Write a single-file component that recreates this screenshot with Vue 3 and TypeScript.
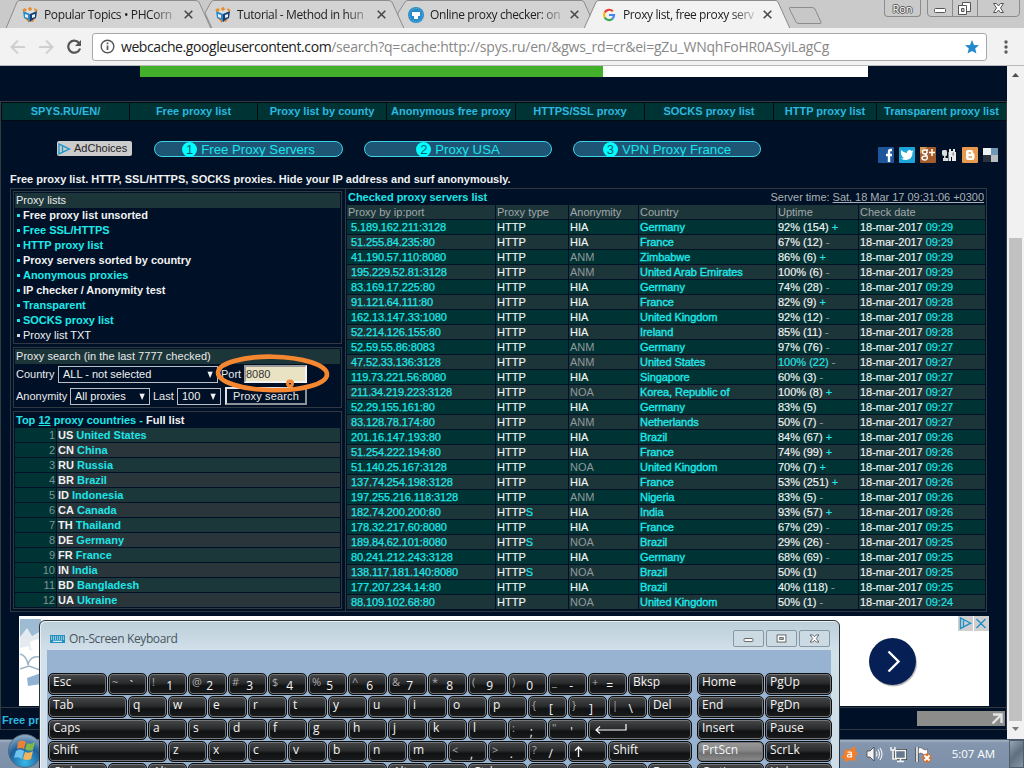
<script setup lang="ts">
interface Tab { title: string; icon: 'cube' | 'disc' | 'google' }
interface Proxy { ip: string; type: string; anon: string; country: string; up: string; trend: string; time: string; hot: boolean }
interface Key { w: number; label?: string; alt?: string; icon?: string; lit?: boolean; low?: boolean }

const tabs: Tab[] = [
  { title: 'Popular Topics • PHCorn', icon: 'cube' },
  { title: 'Tutorial - Method in hun', icon: 'cube' },
  { title: 'Online proxy checker: on', icon: 'disc' },
  { title: 'Proxy list, free proxy serv', icon: 'google' },
]

const nav = ['SPYS.RU/EN/', 'Free proxy list', 'Proxy list by county', 'Anonymous free proxy', 'HTTPS/SSL proxy', 'SOCKS proxy list', 'HTTP proxy list', 'Transparent proxy list']
const pills = ['Free Proxy Servers', 'Proxy USA', 'VPN Proxy France']

const lists = [
  { t: 'Free proxy list unsorted', c: 'white' },
  { t: 'Free SSL/HTTPS', c: 'cyan' },
  { t: 'HTTP proxy list', c: 'cyan' },
  { t: 'Proxy servers sorted by country', c: 'white' },
  { t: 'Anonymous proxies', c: 'cyan' },
  { t: 'IP checker / Anonymity test', c: 'white' },
  { t: 'Transparent', c: 'cyan' },
  { t: 'SOCKS proxy list', c: 'cyan' },
  { t: 'Proxy list TXT', c: 'plain' },
]

const countries = ['US United States', 'CN China', 'RU Russia', 'BR Brazil', 'ID Indonesia', 'CA Canada', 'TH Thailand', 'DE Germany', 'FR France', 'IN India', 'BD Bangladesh', 'UA Ukraine']
  .map((s) => ({ code: s.slice(0, 2), name: s.slice(3) }))

const raw = `5.189.162.211:3128|HTTP|HIA|Germany|92% (154)|+|09:29
51.255.84.235:80|HTTP|HIA|France|67% (12)|-|09:29
41.190.57.110:8080|HTTP|ANM|Zimbabwe|86% (6)|+|09:29
195.229.52.81:3128|HTTP|ANM|United Arab Emirates|100% (6)|-|09:29
83.169.17.225:80|HTTP|HIA|Germany|74% (28)|-|09:29
91.121.64.111:80|HTTP|HIA|France|82% (9)|+|09:28
162.13.147.33:1080|HTTP|HIA|United Kingdom|92% (12)|-|09:28
52.214.126.155:80|HTTP|HIA|Ireland|85% (11)|-|09:28
52.59.55.86:8083|HTTP|ANM|Germany|97% (76)|-|09:27
47.52.33.136:3128|HTTP|ANM|United States|100% (22)|-|09:27
119.73.221.56:8080|HTTP|HIA|Singapore|60% (3)|-|09:27
211.34.219.223:3128|HTTP|NOA|Korea, Republic of|100% (8)|+|09:27
52.29.155.161:80|HTTP|HIA|Germany|83% (5)||09:27
83.128.78.174:80|HTTP|ANM|Netherlands|50% (7)|-|09:27
201.16.147.193:80|HTTP|HIA|Brazil|84% (67)|+|09:26
51.254.222.194:80|HTTP|HIA|France|74% (99)|+|09:26
51.140.25.167:3128|HTTP|NOA|United Kingdom|70% (7)|+|09:26
137.74.254.198:3128|HTTP|HIA|France|53% (251)|+|09:26
197.255.216.118:3128|HTTP|ANM|Nigeria|83% (5)|-|09:26
182.74.200.200:80|HTTPS|HIA|India|93% (57)|+|09:26
178.32.217.60:8080|HTTP|HIA|France|67% (29)|-|09:25
189.84.62.101:8080|HTTPS|NOA|Brazil|29% (26)|-|09:25
80.241.212.243:3128|HTTP|HIA|Germany|68% (69)|-|09:25
138.117.181.140:8080|HTTPS|NOA|Brazil|50% (1)||09:25
177.207.234.14:80|HTTP|HIA|Brazil|40% (118)|-|09:25
88.109.102.68:80|HTTP|NOA|United Kingdom|50% (1)|-|09:24`
const proxies: Proxy[] = raw.split('\n').map((l) => {
  const [ip, type, anon, country, up, trend, time] = l.split('|')
  return { ip, type, anon, country, up, trend, time, hot: up === '100% (22)' }
})

const k = (w: number, label: string): Key => ({ w, label })
const chars = (s: string): Key[] => [...s].map((c) => k(39, c))
const pair = (alt: string, label: string): Key => ({ w: 39, alt, label, low: true })
const mainKeys: Key[][] = [
  [k(59, 'Esc'), pair('~', '`'), pair('!', '1'), pair('@', '2'), pair('#', '3'), pair('$', '4'), pair('%', '5'), pair('^', '6'), pair('&', '7'), pair('*', '8'), pair('(', '9'), pair(')', '0'), pair('_', '-'), pair('+', '='), k(64, 'Bksp')],
  [k(79, 'Tab'), ...chars('qwertyuiop'), pair('{', '['), pair('}', ']'), pair('|', '\\'), k(44, 'Del')],
  [k(99, 'Caps'), ...chars('asdfghjkl'), pair(':', ';'), pair('"', "'"), { w: 104, icon: 'enter' }],
  [k(119, 'Shift'), ...chars('zxcvbnm'), pair('<', ','), pair('>', '.'), pair('?', '/'), { w: 39, icon: 'up' }, k(84, 'Shift')],
  [k(59, 'Ctrl'), { w: 39, icon: 'win' }, k(39, 'Alt'), k(199, ''), k(39, 'Alt'), { w: 39, icon: 'menu' }, k(59, 'Ctrl'), k(39, ''), k(39, ''), k(39, ''), k(44, 'Fn')],
]
const sideKeys: Key[][] = [
  [k(67, 'Home'), k(67, 'PgUp')],
  [k(67, 'End'), k(67, 'PgDn')],
  [k(67, 'Insert'), k(67, 'Pause')],
  [{ w: 67, label: 'PrtScn', lit: true }, k(67, 'ScrLk')],
  [k(67, 'Options'), k(67, 'Help')],
]
</script>

<template>
  <div class="screen">
    <header class="strip">
      <svg class="strip-bg" width="1024" height="29" viewBox="0 0 1024 29">
        <g fill="#d3d3d3" stroke="#8c8c8c">
          <path d="M398 13 L405 2 Q406 .5 408 .5 H581 Q583 .5 584 2 L596 28.500H398Z" />
          <path d="M205 13 L211 2 Q212 .5 214 .5 H388 Q391 .5 392 2 L404 28.500H212Z" />
          <path d="M6 28.500 L17 2 Q18 .5 20 .5 H195 Q198 .5 199 2 L211 28.500Z" />
          <path d="M790 7.500H812Q814 7.500 815 9L821 22Q821.500 23.500 820 23.500H799Q797 23.500 796 22L789.500 9Q789 7.500 790 7.500Z" fill="#c8c8c8" />
        </g>
        <path d="M0 28.500H584L596 2Q597 .5 599 .5H775Q777 .5 778 2L790 28.500H1024" fill="none" stroke="#8c8c8c" />
        <path d="M584.500 29L596.500 2.500Q597 1 599 1H775Q777 1 777.500 2.500L789.500 29Z" fill="#f2f2f2" />
      </svg>
      <div class="tabs">
        <div v-for="t in tabs" :key="t.title" class="tab">
          <svg v-if="t.icon === 'cube'" width="16" height="16" viewBox="0 0 16 16">
            <path d="M1 4L8 2L15 4L8 7Z" fill="#d9e0e4" /><path d="M1 4L8 7V15L2 11Z" fill="#2a86c6" /><path d="M15 4L8 7V15L14 11Z" fill="#173f73" />
            <path d="M0 3L3 1L5 3L3 5Z M6 1L9 0L10 3L7 4Z M12 1L16 3L13 5Z" fill="#e98b28" /><path d="M3 7L6 8V11L3 10ZM10 8L13 7V10L10 11Z" fill="#e8eef2" /><path d="M3 11L7 13V16ZM9 14L13 11L11 15Z" fill="#de7e22" />
          </svg>
          <svg v-else-if="t.icon === 'disc'" width="16" height="16" viewBox="0 0 16 16">
            <circle cx="8" cy="8" r="8" fill="#278bc8" /><circle cx="8" cy="8" r="6.500" fill="none" stroke="#6bb8e3" stroke-dasharray="1 1" /><path d="M4 5H12V9H10V12H6V9H4Z" fill="#fff" />
          </svg>
          <svg v-else width="16" height="16" viewBox="0 0 16 16" fill="none" stroke-width="2.200">
            <path d="M11.800 4.300A5 5 0 0 0 3.700 5.500" stroke="#e94235" /><path d="M3.700 5.500A5 5 0 0 0 3.700 10.500" stroke="#f9bb05" /><path d="M3.700 10.500A5 5 0 0 0 11.500 11.700" stroke="#34a853" /><path d="M11.500 11.700A5 5 0 0 0 13 8H8" stroke="#4285f4" />
          </svg>
          <span class="tab-title">{{ t.title }}</span>
          <svg width="9" height="9" viewBox="0 0 9 9"><path d="M.7.7L8.300 8.300M8.300.7L.7 8.300" stroke="#4a4a4a" stroke-width="1.600" /></svg>
        </div>
      </div>
      <div class="win-btns">
        <span class="user">Ron</span>
        <svg width="93" height="17" viewBox="0 0 93 17">
          <path d="M.5 0V13Q.5 16.500 4 16.500H89Q92.500 16.500 92.500 13V0M25.500 0V16M50.500 0V16" fill="none" stroke="#8b8b8b" />
          <rect x="7.500" y="8.500" width="11" height="4" rx="1" fill="#fff" stroke="#555" />
          <path d="M35.500 2.500H43.500V11.500H35.500Z" fill="#fff" stroke="#555" /><path d="M31.500 5.500H39.500V14.500H31.500Z" fill="#fff" stroke="#555" /><path d="M34.500 8.500H37V11.500H34.500Z" fill="#ccc" stroke="#555" />
          <path d="M66.500 3.500H69.500L71.500 6L73.500 3.500H76.500L73.500 8L76.500 12.500H73.500L71.500 10L69.500 12.500H66.500L69.500 8Z" fill="#fff" stroke="#555" />
        </svg>
      </div>
    </header>

    <div class="toolbar">
      <svg width="76" height="20" viewBox="0 0 76 20" fill="none" stroke-width="2">
        <path d="M20 10H7M13 3.500L6.500 10L13 16.500" stroke="#cfcfcf" /><path d="M34 10H47M41 3.500L47.500 10L41 16.500" stroke="#cfcfcf" />
        <path d="M74 6A6 6 0 1 0 75 11.500" stroke="#555" stroke-width="2.200" /><path d="M76 3V9H70Z" fill="#555" />
      </svg>
      <div class="omni">
        <svg width="15" height="15" viewBox="0 0 15 15"><circle cx="7.500" cy="7.500" r="6.300" fill="none" stroke="#555" stroke-width="1.400" /><path d="M7.500 6.500V11M7.500 3.500V5.200" stroke="#555" stroke-width="1.700" /></svg>
        <div class="url"><b>webcache.googleusercontent.com</b><span>/search?q=cache:http://spys.ru/en/&amp;gws_rd=cr&amp;ei=gZu_WNqhFoHR0ASyiLagCg</span></div>
        <svg class="star" width="14" height="14" viewBox="0 0 14 14"><path d="M7 0L9 4.900L14 5.300L10.200 8.600L11.400 13.600L7 10.900L2.600 13.600L3.800 8.600L0 5.300L5 4.900Z" fill="#2389cd" /></svg>
      </div>
      <svg width="4" height="14" viewBox="0 0 4 14" fill="#5a5a5a"><circle cx="2" cy="2" r="1.700" /><circle cx="2" cy="7" r="1.700" /><circle cx="2" cy="12" r="1.700" /></svg>
    </div>

    <div class="viewport">
      <main class="page">
        <div class="banner-top"><i></i></div>
        <div class="frame">
          <nav><a v-for="n in nav" :key="n">{{ n }}</a></nav>

          <div class="promo">
            <div class="adchoices"><svg width="13" height="12" viewBox="0 0 13 12" fill="none" stroke="#2597cc" stroke-width="1.400"><path d="M1 1V11L11.500 6ZM4.500 3V9" /></svg>AdChoices</div>
            <div v-for="(p, i) in pills" :key="p" class="pill"><em>{{ i + 1 }}</em><span>{{ p }}</span></div>
            <div class="social">
              <svg viewBox="0 0 16 16"><rect width="16" height="16" rx="1" fill="#1d569b" /><path d="M14 3H12.500Q11 3 11 5V15M8 8H14" stroke="#fff" stroke-width="2.400" fill="none" /></svg>
              <svg viewBox="0 0 16 16"><rect width="16" height="16" rx="1" fill="#1ba4d8" /><path d="M2 3Q5 6 8 6Q8 3 10.500 3Q12 3 12.500 4L14.500 3.500L13.500 5Q14 12 7 13Q4 13 2 11.500Q4 11.500 5 11Q3 10 3 9Q1.500 7 2 3Z" fill="#fff" /></svg>
              <svg viewBox="0 0 16 16"><rect width="16" height="16" rx="1" fill="#a55c2c" /><path d="M0 0H7L0 7Z" fill="#d39b55" /><path d="M8 3H5Q2.500 3 2.500 5T5 7Q7 7 7 5T6 3M5 7L7 9Q8 13 5 13Q2 13 2 11T6 9M12 2V9M9 5.500H15" fill="none" stroke="#fff" stroke-width="1.500" /></svg>
              <svg viewBox="0 0 16 16"><path d="M1 4Q1 3 3 3H5Q6 3 6 5V8Q6 9 4.500 9V11H7V14H2V11H3V9Q1 9 1 7Z" fill="#dcdcdc" /><path d="M8 5V2H10V4H12V2H14V5H15V14H11V10H10V14H7.500V5Z" fill="#e9e9e9" /><path d="M11.500 5.500H13V8.500H11.500Z" fill="#8b8f94" /></svg>
              <svg viewBox="0 0 16 16"><rect width="16" height="16" rx="1" fill="#e7994f" /><path d="M4 5Q4 3 6 3H9Q11 3 11 5Q11 6.500 12.500 7V11Q12.500 13 10 13H6Q4 13 4 11Z" fill="#fff" /><path d="M6.500 6H9M6.500 10H10" stroke="#e7994f" stroke-width="1.500" /></svg>
              <svg viewBox="0 0 16 16"><path d="M0 1H8V8H0Z" fill="#eef2f4" /><path d="M8 1H15V8H8Z" fill="#6f98b7" /><path d="M0 8H8V15H0Z" fill="#29323d" /><path d="M8 8H15V15H8Z" fill="#b9bec2" /></svg>
            </div>
          </div>

          <p class="intro">Free proxy list. HTTP, SSL/HTTPS, SOCKS proxies. Hide your IP address and surf anonymously.</p>

          <div class="columns">
            <section class="left">
              <div class="box b1">
                <h3>Proxy lists</h3>
                <div v-for="l in lists" :key="l.t" class="li" :class="l.c"><i></i><span>{{ l.t }}</span></div>
              </div>
              <div class="box b2">
                <h3 class="s2">Proxy search (in the last 7777 checked)</h3>
                <div class="form r1"><label>Country</label><div class="sel w1"><span>ALL - not selected</span><u>▼</u></div><label class="port">Port</label><div class="inp">8080</div></div>
                <div class="form r2"><label>Anonymity</label><div class="sel w2"><span>All proxies</span><u>▼</u></div><label class="last">Last</label><div class="sel w3"><span>100</span><u>▼</u></div><div class="btn">Proxy search</div></div>
              </div>
              <div class="box b3">
                <h4>Top <u>12</u> proxy countries - <span>Full list</span></h4>
                <div v-for="(c, i) in countries" :key="c.code" class="crow" :class="{ alt: i % 2 }"><em>{{ i + 1 }}</em><div><b>{{ c.code }}</b> {{ c.name }}</div></div>
              </div>
            </section>
            <section class="right">
              <div class="rhead"><b>Checked proxy servers list</b><span>Server time: <u>Sat, 18 Mar 17 09:31:06 +0300</u></span></div>
              <div class="row hd"><div>Proxy by ip:port</div><div>Proxy type</div><div>Anonymity</div><div>Country</div><div>Uptime</div><div>Check date</div></div>
              <div v-for="(p, i) in proxies" :key="p.ip" class="row" :class="{ odd: i % 2 }">
                <div class="ip">{{ p.ip }}</div>
                <div>HTTP<s v-if="p.type === 'HTTPS'">S</s></div>
                <div :class="p.anon">{{ p.anon }}</div>
                <div class="cn">{{ p.country }}</div>
                <div :class="{ hot: p.hot }">{{ p.up }} <s v-if="p.trend === '+'">+</s><i v-else>{{ p.trend }}</i></div>
                <div class="dt">18-mar-2017 <s>{{ p.time }}</s></div>
              </div>
            </section>
          </div>

          <div class="ad">
            <svg width="22" height="90" viewBox="0 0 22 90"><path d="M1 3H22V22L12 26L1 21Z" fill="#9dbbd2" /><path d="M1 21L8 12L13 20L22 15V34H10V30L1 32Z" fill="#e3ebf1" /><path d="M11 26Q18 22 22 24V36L12 33Z" fill="#fff" /><path d="M1 38Q8 40 9 49Q11 39 21 41V54L10 50L1 53" fill="none" stroke="#9db5c8" stroke-width="1.500" /><path d="M8 62L22 57V68L9 70Z" fill="#91b2d2" /></svg>
            <div class="ad-r">
              <svg class="go" width="50" height="50" viewBox="0 0 50 50"><circle cx="25.500" cy="26" r="23.500" fill="#bbb" /><circle cx="24.500" cy="24.500" r="23.500" fill="#061f55" /><path d="M20.500 14.500L30.500 24.500L20.500 34.500" fill="none" stroke="#fff" stroke-width="2.400" /></svg>
              <svg class="adx" width="31" height="15" viewBox="0 0 31 15"><path d="M0 0H15V15H0ZM16 0H31V15H16Z" fill="#cfcfcf" /><path d="M2.500 2V12.500L12.500 7.200ZM5.500 4.500V10.500M18.500 3L27.500 12M27.500 3L18.500 12" fill="none" stroke="#2390c8" stroke-width="1.400" /></svg>
            </div>
          </div>
          <footer><b>Free pr</b><div class="grip"><svg width="12" height="12" viewBox="0 0 12 12"><path d="M2 1.500H10.500V10M10 2L1.500 10.500" fill="none" stroke="#e4e4e4" stroke-width="2.400" /></svg></div></footer>
        </div>
      </main>
      <div class="sb">
        <svg width="7" height="4" viewBox="0 0 7 4"><path d="M0 4L3.500 0L7 4Z" fill="#4e4e4e" /></svg>
        <div class="thumb"></div>
        <svg class="dn" width="7" height="4" viewBox="0 0 7 4"><path d="M0 0L3.500 4L7 0Z" fill="#7a7a7a" /></svg>
      </div>
    </div>

    <div class="taskbar">
      <div class="tray">
        <svg width="17" height="17" viewBox="0 0 17 17"><path d="M4 3L8 4L14 0L14.500 5L17 8L14 10L15 15L9.500 14L4 16L4 13L0 12L3 8Z" fill="#f47d27" /><path d="M6.500 6.200H9.500Q10.500 6.200 10.500 7.500V11.500M10.500 8.300H8Q6.300 8.500 6.300 9.800T8 11Q10.500 11 10.500 9" fill="none" stroke="#fff" stroke-width="1.200" /></svg>
        <svg width="17" height="16" viewBox="0 0 17 16"><path d="M1 5H4L8 1V15L4 11H1Z" fill="#f4f4f4" stroke="#333" stroke-width=".7" /><path d="M10 5.500Q12 8 10 10.500M12 3.500Q15 8 12 12.500M14 2Q18 8 14 14" fill="none" stroke="#f4f4f4" stroke-width="1.100" /></svg>
        <svg width="17" height="17" viewBox="0 0 17 17"><path d="M5.500 4.500H15.500V12.500H5.500Z" fill="#566b80" stroke="#333" stroke-width="3" /><path d="M5.500 4.500H15.500V12.500H5.500Z" fill="#65788d" stroke="#f3f3f3" stroke-width="1.500" /><path d="M1 1V4H5V1M3 4V13H7M7 15.500H14M10.500 13V15" fill="none" stroke="#f3f3f3" stroke-width="1.500" /></svg>
        <svg width="17" height="17" viewBox="0 0 17 17"><path d="M2 1V16" stroke="#333" stroke-width="3" /><path d="M2 1V16" stroke="#fff" stroke-width="1.600" /><path d="M3.500 2Q6 1 8 3T12.500 3V9Q10 10 8 8T3.500 8Z" fill="#fff" stroke="#444" stroke-width=".5" /><circle cx="12" cy="12" r="4.500" fill="#db7028" /><path d="M9.500 9.500L14.500 14.500M14.500 9.500L9.500 14.500" stroke="#fff" stroke-width="2" /></svg>
      </div>
      <span class="clock">5:07 AM</span>
      <div class="peek"></div>
    </div>

    <svg class="orb" width="34" height="36" viewBox="0 0 34 36">
      <defs><radialGradient id="o" cx=".5" cy=".85" r=".9"><stop offset="0" stop-color="#37b8e8" /><stop offset=".55" stop-color="#1c5f9c" /><stop offset="1" stop-color="#a9bccb" /></radialGradient></defs>
      <circle cx="17" cy="18" r="16.500" fill="url(#o)" stroke="#55687b" />
      <path d="M10 9Q14 6 18 9L16 16Q12 14 9 16Z" fill="#e88236" /><path d="M19 10Q23 12 27 9L25 17Q21 19 17 16Z" fill="#7fb84a" /><path d="M8 18Q12 15 16 18L14 26Q10 23 6 25Z" fill="#6fc3ee" /><path d="M17 19Q21 21 25 18L23 26Q19 28 15 26Z" fill="#f2b55c" />
    </svg>

    <svg class="mark" width="118" height="44" viewBox="0 0 118 44" fill="none" stroke="#f58731">
      <ellipse cx="58.500" cy="21.500" rx="54.500" ry="16.800" stroke-width="4.600" transform="rotate(1 59 21.500)" /><circle cx="76" cy="31.500" r="2.500" stroke-width="3" />
    </svg>

    <div class="osk">
      <div class="osk-title">
        <svg width="15" height="8" viewBox="0 0 15 8"><rect width="15" height="8" fill="#2390be" /><path d="M1 2H14M1 4H14" stroke="#fff" stroke-dasharray="1 1" /><path d="M3 6.300H12" stroke="#fff" /></svg>
        <span>On-Screen Keyboard</span>
        <div class="osk-btns">
          <svg viewBox="0 0 31 17"><rect x="10.500" y="8.500" width="10" height="3.500" rx="1" fill="#fff" stroke="#555" /></svg>
          <svg viewBox="0 0 31 17"><rect x="10.500" y="4.500" width="10" height="8" fill="#fff" stroke="#555" /><rect x="13.500" y="7.500" width="4" height="2" fill="#ccc" stroke="#555" /></svg>
          <svg viewBox="0 0 31 17"><path d="M10.500 4.500H13.500L15.500 6.500L17.500 4.500H20.500L17.500 8.500L20.500 12.500H17.500L15.500 10.500L13.500 12.500H10.500L13.500 8.500Z" fill="#fff" stroke="#555" /></svg>
        </div>
      </div>
      <div class="osk-body">
        <div v-for="(g, gi) in [mainKeys, sideKeys]" :key="gi" class="keys">
          <div v-for="(r, ri) in g" :key="ri" class="krow">
            <div v-for="(key, ki) in r" :key="ki" class="key" :class="{ lit: key.lit, pair: key.low }" :style="{ width: key.w + 'px' }">
              <small v-if="key.alt">{{ key.alt }}</small>
              <span v-if="key.label">{{ key.label }}</span>
              <svg v-if="key.icon === 'enter'" width="34" height="12" viewBox="0 0 34 12" fill="none" stroke="#fff" stroke-width="1.200"><path d="M32 1V7H2M6 3.500L2 7L6 10.500" /></svg>
              <svg v-if="key.icon === 'up'" width="9" height="14" viewBox="0 0 9 14" fill="none" stroke="#fff" stroke-width="1.300"><path d="M4.500 12V2M1 5.500L4.500 2L8 5.500" /></svg>
              <svg v-if="key.icon === 'win'" width="11" height="10" viewBox="0 0 11 10" fill="#ddd"><path d="M1 3Q3 1 5 2.500V6H0ZM6 3Q8 4 11 2.500V6H6Z" /></svg>
              <svg v-if="key.icon === 'menu'" width="12" height="10" viewBox="0 0 12 10" fill="none" stroke="#fff"><path d="M1 2H11V9H1Z" stroke-width="2" /></svg>
            </div>
          </div>
        </div>
      </div>
    </div>
  </div>
</template>

<style>
html, body { margin: 0; overflow: hidden; }
</style>

<style scoped>
* { box-sizing: border-box; }
s, u, em, i { text-decoration: none; font-style: normal; }
svg { display: block; flex: none; }
.screen { position: relative; width: 1024px; height: 768px; overflow: hidden; font: 11px/15px "Liberation Sans", Arial, sans-serif; background: #001024; display: flex; flex-direction: column; }

.strip { position: relative; height: 28px; flex: none; background: #cacaca; display: flex; justify-content: space-between; }
.strip-bg { position: absolute; left: 0; top: 0; }
.tabs { position: relative; display: flex; padding-left: 22px; }
.tab { width: 193px; display: flex; align-items: center; padding-top: 1px; }
.tab-title { width: 134px; margin: 0 6px 0 6px; overflow: hidden; white-space: nowrap; font: 12px/20px "Open Sans", "Noto Sans", sans-serif; letter-spacing: -.38px; color: #222; -webkit-mask-image: linear-gradient(90deg, #000 108px, rgba(0, 0, 0, .2) 132px); mask-image: linear-gradient(90deg, #000 108px, rgba(0, 0, 0, .2) 132px); }
.win-btns { position: relative; display: flex; gap: 6px; padding-right: 4px; align-items: flex-start; }
.user { width: 37px; height: 17px; border: 1px solid #8b8b8b; border-top: 0; border-radius: 0 0 4px 4px; text-align: center; font: 11px/17px "Open Sans", sans-serif; color: #fff; text-shadow: 1px 0 #555, -1px 0 #555, 0 1px #555, 0 -1px #555; }

.toolbar { position: relative; height: 38px; flex: none; background: #f2f2f2; border-bottom: 1px solid #b9b9b9; display: flex; align-items: center; padding: 0 15px 0 5px; }
.toolbar > svg:last-child { margin-left: 17px; }
.omni { margin-left: 11px; width: 895px; height: 28px; border: 1px solid #a8a8a8; border-radius: 3px; background: #fff; display: flex; align-items: center; padding: 0 7px; }
.url { margin-left: 6px; font: 14px/20px "Open Sans", "Noto Sans", sans-serif; letter-spacing: -.21px; white-space: nowrap; color: #888; }
.url b { font-weight: 400; color: #222; letter-spacing: -.42px; }
.star { margin-left: auto; }

.viewport { height: 673px; flex: none; display: flex; }
.page { width: 1007px; background: #001026; color: #e8eaea; }
.banner-top { margin: 0 139px 0 140px; height: 11px; background: #fff; }
.banner-top i { display: block; width: 463px; height: 11px; background: #43b02b; }
.frame { margin-top: 24px; height: 629px; border: 1px solid #333b42; border-bottom: 0; }
nav { display: grid; grid-template-columns: 128px 128px 129px 129px 129px 129px 103px 130px; height: 18px; }
nav a { background: #003333; border: 1px solid #000a10; border-right-width: 0; color: #2cb8e0; font-weight: 700; text-align: center; line-height: 17px; white-space: nowrap; }
.promo { height: 44px; margin-top: 21px; display: flex; align-items: flex-start; padding-left: 56px; }
.adchoices { width: 75px; height: 15px; background: #ccc; border-radius: 2px; display: flex; align-items: center; gap: 3px; padding-left: 1px; color: #222; font-size: 11px; }
.pill { margin-left: 21px; width: 188px; height: 16px; border: 1px solid #3ad5e8; border-radius: 8px; background: #1e5474; color: #17e6ee; font-size: 13.200px; line-height: 15px; display: flex; justify-content: center; gap: 4px; white-space: nowrap; }
.adchoices + .pill { margin-left: 22px; width: 189px; }
.pill em { width: 15px; height: 15px; border-radius: 8px; background: #0ff; color: #075c70; text-align: center; font-size: 13px; }
.social { display: flex; gap: 5px; margin: 6px 0 0 117px; }
.social svg { width: 16px; height: 16px; }
.intro { margin: -14px 0 0 9px; height: 17px; line-height: 17px; font-weight: 700; color: #f0f2f2; white-space: nowrap; }

.columns { display: flex; margin: 0 0 0 9px; width: 977px; height: 424px; border: 1px solid #303941; }
.left { width: 334px; padding: 2px; flex: none; }
.box { width: 329px; border: 1px solid #303941; padding: 1px; }
.b1 { height: 153px; }
.b2 { height: 61px; margin-top: 3px; }
.b3 { height: 198px; margin-top: 3px; }
h3 { margin: 0; height: 15px; line-height: 15px; font-size: 11px; font-weight: 400; background: #1c3539; color: #e8eaea; padding-left: 1px; }
.s2 { letter-spacing: .04px; }
.li { display: flex; align-items: center; height: 15px; padding-left: 2px; gap: 3px; font-weight: 700; color: #f0f2f2; white-space: nowrap; letter-spacing: -.02px; }
.li i { width: 3px; height: 3px; background: #1de5e8; }
.cyan { color: #1de9ea; }
.plain { font-weight: 400; }
.plain i { background: #ddd; }
.form { display: flex; align-items: center; height: 22px; padding-left: 1px; white-space: nowrap; line-height: 14px; }
.r1 { margin-top: -1px; }
.form label { flex: none; }
.sel { height: 17px; border: 1px solid #b9bfc4; display: flex; align-items: center; justify-content: space-between; padding: 0 4px 0 4px; color: #f0f2f2; flex: none; }
.sel u { font: 8px/13px "DejaVu Sans", sans-serif; transform: scaleX(.85); }
.r1 label:first-child { width: 42px; }
.r2 label:first-child { width: 54px; }
.w1 { width: 160px; }
.w2 { width: 80px; }
.w3 { width: 44px; }
.port { width: 26px; padding-left: 3px; }
.last { width: 27px; padding-left: 3px; }
.inp { width: 63px; height: 18px; background: #e9e3c4; border: 2px solid #c9c9c0; border-color: #999 #f4f4f4 #f4f4f4 #999; color: #333; line-height: 14px; }
.btn { margin-left: 4px; width: 82px; height: 18px; border: 2px solid; border-color: #e0e3e5 #8b9196 #8b9196 #e0e3e5; text-align: center; line-height: 14px; letter-spacing: .15px; }
h4 { margin: 0; height: 15px; line-height: 15px; font-size: 11px; color: #1de5e8; padding-left: 1px; }
h4 u { text-decoration: underline; }
h4 span { color: #f0f2f2; }
.crow { display: flex; gap: 1px; height: 14px; margin-bottom: 1px; line-height: 14px; }
.crow em { width: 41px; background: #003333; color: #7e9494; text-align: right; padding-right: 1px; }
.crow div { width: 283px; background: #1b373a; padding-left: 1px; font-weight: 700; color: #1de5e8; }
.crow.alt div { background: #29353a; }
.crow b { color: #f0f2f2; }

.right { width: 641px; flex: none; border-left: 1px solid #303941; padding: 1px; }
.rhead { height: 15px; display: flex; justify-content: space-between; padding: 0 1px; line-height: 15px; color: #a9b0b4; white-space: nowrap; }
.rhead b { color: #1de5e8; letter-spacing: -.03px; }
.rhead span { letter-spacing: -.02px; }
.rhead u { text-decoration: underline; }
.row { display: grid; grid-template-columns: 148px 72px 69px 137px 81px 126px; gap: 1px; height: 14px; margin-bottom: 1px; line-height: 14px; white-space: nowrap; }
.row div { background: #003333; padding-left: 1px; color: #f2f5f5; -webkit-text-stroke: .15px; }
.row.hd div { background: #1c3539; color: #a0a8aa; -webkit-text-stroke: 0; }
.row.odd div { background: #1c3539; }
.row s { color: #1de5e8; }
.row i { color: #8a9598; }
.row .ip { padding-left: 4px; color: #1fe6e8; letter-spacing: -.12px; -webkit-text-stroke: .25px; }
.row .cn { -webkit-text-stroke: .35px; letter-spacing: -.06px; }
.row .cn, .row .hot { color: #1de9ea; }
.row .ANM, .row .NOA { color: #8f999c; -webkit-text-stroke: 0; }
.row .dt { letter-spacing: -.03px; }

.ad { margin: 4px 0 0 18px; width: 970px; height: 90px; background: #fff; display: flex; justify-content: space-between; }
.ad-r { display: flex; align-items: flex-start; }
.go { margin: 21px 40px 0 0; }
footer { height: 23px; margin-top: 1px; border: 1px solid #303941; border-width: 1px 0; display: flex; justify-content: space-between; align-items: center; padding: 0 1px; }
footer b { color: #2cb8e0; padding-top: 4px; }
.grip { width: 88px; height: 15px; background: #8c8c8a; display: flex; align-items: center; justify-content: flex-end; padding-right: 2px; }

.sb { width: 17px; background: #f1f1f1; display: flex; flex-direction: column; align-items: center; padding: 7px 0 0; }
.thumb { margin-top: 161px; width: 13px; height: 483px; background: #c1c1c1; }
.dn { margin-top: 6px; }

.taskbar { height: 29px; flex: none; background: linear-gradient(#a4b2c4, #8496ae 3px, #7d90a9); border-top: 1px solid #4a5a6c; display: flex; justify-content: flex-end; align-items: center; color: #fff; }
.tray { display: flex; gap: 7.500px; align-items: center; }
.clock { margin: 0 14px 0 20px; font: 11.500px/20px "Open Sans", sans-serif; white-space: nowrap; }
.peek { width: 15px; height: 28px; border: 1px solid #4f5d6c; background: linear-gradient(135deg, #98a6b5, #5f6f7f 50%, #8796a6); }
.orb { position: absolute; left: 8px; top: 733px; }
.mark { position: absolute; left: 214px; top: 352px; }

.osk { position: absolute; left: 39px; top: 620px; width: 801px; height: 160px; border: 1px solid #2c343a; border-radius: 6px 6px 0 0; background: linear-gradient(#bccfd9, #d2e0ea 30px, #cfdde8); padding: 0 8px 0 7px; box-shadow: inset 1px 1px #e8f0f5; }
.osk-title { height: 29px; display: flex; align-items: center; padding: 7px 1px 0 3px; color: #48555e; }
.osk-title span { margin-left: 4px; font: 12px/18px "Open Sans", sans-serif; letter-spacing: -.38px; }
.osk-btns { margin: -1px 0 0 auto; display: flex; gap: 2px; }
.osk-btns svg { width: 31px; height: 17px; border: 1px solid #8797a3; border-radius: 2px; background: #cbdae3; }
.osk-body { background: #98b2d1; padding: 23px 0 0 1px; height: 130px; display: flex; gap: 5px; }
.keys { display: grid; grid-template-rows: 22px 22px 21px 21px 22px; gap: 1px; }
.krow { display: flex; gap: 1px; }
.key { position: relative; flex: none; border: 1px solid #0c0d0e; border-radius: 5px; background: linear-gradient(#47484a, #2a2b2c 45%, #111213 60%, #1a1b1c); box-shadow: inset 0 0 0 1px #737578; color: #f4f4f4; font: 12px/16px "Open Sans", "Noto Sans", sans-serif; padding: 0 4px; display: flex; white-space: nowrap; }
.pair { justify-content: space-between; padding: 0 13px 0 3px; }
.pair span { padding-top: 4px; }
.pair small { font-size: 11px; line-height: 15px; color: #aaa; }
.key svg { margin: 3px 0 0 1px; }
.lit { background: linear-gradient(#9a9a9a, #858585 45%, #6f6f6f 60%, #8a8a8a); }
</style>
